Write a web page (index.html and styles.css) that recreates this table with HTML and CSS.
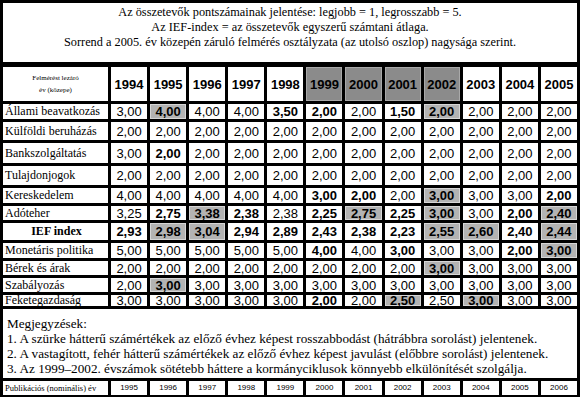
FILE: index.html
```html
<!DOCTYPE html>
<html lang="hu">
<head>
    <meta charset="UTF-8">
    <title>IEF index</title>
    <link rel="stylesheet" href="styles.css">
</head>
<body>
    <div class="sheet">
        <div class="intro">
            <p>Az összetevők pontszámainak jelentése: legjobb = 1, legrosszabb = 5.</p>
            <p>Az IEF-index = az összetevők egyszerű számtani átlaga.</p>
            <p>Sorrend a 2005. év közepén záruló felmérés osztályzata (az utolsó oszlop) nagysága szerint.</p>
        </div>

        <div class="grid">
            <div class="corner">Felmérést lezáró<br>év (közepe)</div>
            <div class="yr">1994</div><div class="yr">1995</div><div class="yr">1996</div><div class="yr">1997</div>
            <div class="yr">1998</div><div class="yr dark">1999</div><div class="yr dark">2000</div><div class="yr dark">2001</div>
            <div class="yr dark">2002</div><div class="yr">2003</div><div class="yr">2004</div><div class="yr">2005</div>

            <div class="lbl">Állami beavatkozás</div>
            <div class="v">3,00</div><div class="v g">4,00</div><div class="v">4,00</div><div class="v">4,00</div>
            <div class="v b">3,50</div><div class="v b">2,00</div><div class="v">2,00</div><div class="v b">1,50</div>
            <div class="v g">2,00</div><div class="v">2,00</div><div class="v">2,00</div><div class="v">2,00</div>

            <div class="lbl">Külföldi beruházás</div>
            <div class="v">2,00</div><div class="v">2,00</div><div class="v">2,00</div><div class="v">2,00</div>
            <div class="v">2,00</div><div class="v">2,00</div><div class="v">2,00</div><div class="v">2,00</div>
            <div class="v">2,00</div><div class="v">2,00</div><div class="v">2,00</div><div class="v">2,00</div>

            <div class="lbl">Bankszolgáltatás</div>
            <div class="v">3,00</div><div class="v b">2,00</div><div class="v">2,00</div><div class="v">2,00</div>
            <div class="v">2,00</div><div class="v">2,00</div><div class="v">2,00</div><div class="v">2,00</div>
            <div class="v">2,00</div><div class="v">2,00</div><div class="v">2,00</div><div class="v">2,00</div>

            <div class="lbl">Tulajdonjogok</div>
            <div class="v">2,00</div><div class="v">2,00</div><div class="v">2,00</div><div class="v">2,00</div>
            <div class="v">2,00</div><div class="v">2,00</div><div class="v">2,00</div><div class="v">2,00</div>
            <div class="v">2,00</div><div class="v">2,00</div><div class="v">2,00</div><div class="v">2,00</div>

            <div class="lbl">Kereskedelem</div>
            <div class="v">4,00</div><div class="v">4,00</div><div class="v">4,00</div><div class="v">4,00</div>
            <div class="v">4,00</div><div class="v b">3,00</div><div class="v b">2,00</div><div class="v">2,00</div>
            <div class="v g">3,00</div><div class="v">3,00</div><div class="v">3,00</div><div class="v b">2,00</div>

            <div class="lbl">Adóteher</div>
            <div class="v">3,25</div><div class="v b">2,75</div><div class="v g">3,38</div><div class="v b">2,38</div>
            <div class="v">2,38</div><div class="v b">2,25</div><div class="v g">2,75</div><div class="v b">2,25</div>
            <div class="v g">3,00</div><div class="v">3,00</div><div class="v b">2,00</div><div class="v g">2,40</div>

            <div class="lbl ief">IEF index</div>
            <div class="v b">2,93</div><div class="v g">2,98</div><div class="v g">3,04</div><div class="v b">2,94</div>
            <div class="v b">2,89</div><div class="v b">2,43</div><div class="v b">2,38</div><div class="v b">2,23</div>
            <div class="v g">2,55</div><div class="v g">2,60</div><div class="v b">2,40</div><div class="v g">2,44</div>

            <div class="lbl">Monetáris politika</div>
            <div class="v">5,00</div><div class="v">5,00</div><div class="v">5,00</div><div class="v">5,00</div>
            <div class="v">5,00</div><div class="v b">4,00</div><div class="v">4,00</div><div class="v b">3,00</div>
            <div class="v">3,00</div><div class="v">3,00</div><div class="v b">2,00</div><div class="v g">3,00</div>

            <div class="lbl">Bérek és árak</div>
            <div class="v">2,00</div><div class="v">2,00</div><div class="v">2,00</div><div class="v">2,00</div>
            <div class="v">2,00</div><div class="v">2,00</div><div class="v">2,00</div><div class="v">2,00</div>
            <div class="v g">3,00</div><div class="v">3,00</div><div class="v">3,00</div><div class="v">3,00</div>

            <div class="lbl">Szabályozás</div>
            <div class="v">2,00</div><div class="v g">3,00</div><div class="v">3,00</div><div class="v">3,00</div>
            <div class="v">3,00</div><div class="v">3,00</div><div class="v">3,00</div><div class="v">3,00</div>
            <div class="v">3,00</div><div class="v">3,00</div><div class="v">3,00</div><div class="v">3,00</div>

            <div class="lbl">Feketegazdaság</div>
            <div class="v">3,00</div><div class="v">3,00</div><div class="v">3,00</div><div class="v">3,00</div>
            <div class="v">3,00</div><div class="v b">2,00</div><div class="v">2,00</div><div class="v g">2,50</div>
            <div class="v">2,50</div><div class="v g">3,00</div><div class="v">3,00</div><div class="v">3,00</div>
        </div>

        <div class="notes">
            <p>Megjegyzések:</p>
            <p>1. A szürke hátterű számértékek az előző évhez képest rosszabbodást (hátrábbra sorolást) jelentenek.</p>
            <p>2. A vastagított, fehér hátterű számértékek az előző évhez képest javulást (előbbre sorolást) jelentenek.</p>
            <p>3. Az 1999–2002. évszámok sötétebb háttere a kormányciklusok könnyebb elkülönítését szolgálja.</p>
        </div>

        <div class="pub">
            <div class="pub-lbl">Publikációs (nominális) év</div>
            <div>1995</div><div>1996</div><div>1997</div><div>1998</div><div>1999</div><div>2000</div>
            <div>2001</div><div>2002</div><div>2003</div><div>2004</div><div>2005</div><div>2006</div>
        </div>
    </div>
</body>
</html>
```

FILE: styles.css
```css
*{
    margin: 0;
    padding: 0;
}
body{
    background: #fff;
}
.sheet{
    width: 580px;
    box-sizing: border-box;
    background: #000;
    padding: 3px 3px 2px 3px;
}
.intro{
    height: 59px;
    background: #fff;
    padding-top: 2px;
    box-sizing: border-box;
    text-align: center;
    font-family: "Liberation Serif", serif;
    font-size: 12.3px;
    line-height: 15px;
}
.grid{
    margin-top: 5px;
    display: grid;
    grid-template-columns: 105px repeat(12, 1fr);
    grid-template-rows: 34px 15px 18px 20px 19px 15px 14px 17px 15px 14px 14px 11px;
    gap: 3px;
}
.grid > div{
    background: #fff;
    display: flex;
    align-items: center;
    justify-content: center;
    white-space: nowrap;
}
.corner{
    font-family: "Liberation Serif", serif;
    font-size: 7px;
    line-height: 12px;
    text-align: center;
}
.yr{
    font-family: "Liberation Sans", sans-serif;
    font-size: 13px;
    font-weight: bold;
}
.grid > .dark{
    background: #8b8b8b;
    box-shadow: inset 0 0 0 1px #a9a9a9;
}
.grid > .lbl{
    justify-content: flex-start;
    padding-left: 2px;
    font-family: "Liberation Serif", serif;
    font-size: 12px;
}
.grid > .ief{
    justify-content: center;
    font-weight: bold;
}
.v{
    font-family: "Liberation Sans", sans-serif;
    font-size: 13px;
}
.b{
    font-weight: bold;
}
.grid > .g{
    font-weight: bold;
    background: #b3b3b3;
    box-shadow: inset 0 0 0 1px #d6d6d6;
}
.notes{
    margin-top: 3px;
    height: 69px;
    box-sizing: border-box;
    background: #fff;
    padding: 7px 0 0 4px;
    font-family: "Liberation Serif", serif;
    font-size: 13.2px;
    line-height: 15px;
}
.pub{
    margin-top: 3px;
    display: grid;
    grid-template-columns: 105px repeat(12, 1fr);
    grid-auto-rows: 14px;
    gap: 3px;
}
.pub > div{
    background: #fff;
    text-align: center;
    white-space: nowrap;
    font-family: "Liberation Sans", sans-serif;
    font-size: 8px;
    line-height: 14px;
}
.pub > .pub-lbl{
    text-align: left;
    padding-left: 2px;
    font-family: "Liberation Serif", serif;
    font-size: 8.5px;
}
```
